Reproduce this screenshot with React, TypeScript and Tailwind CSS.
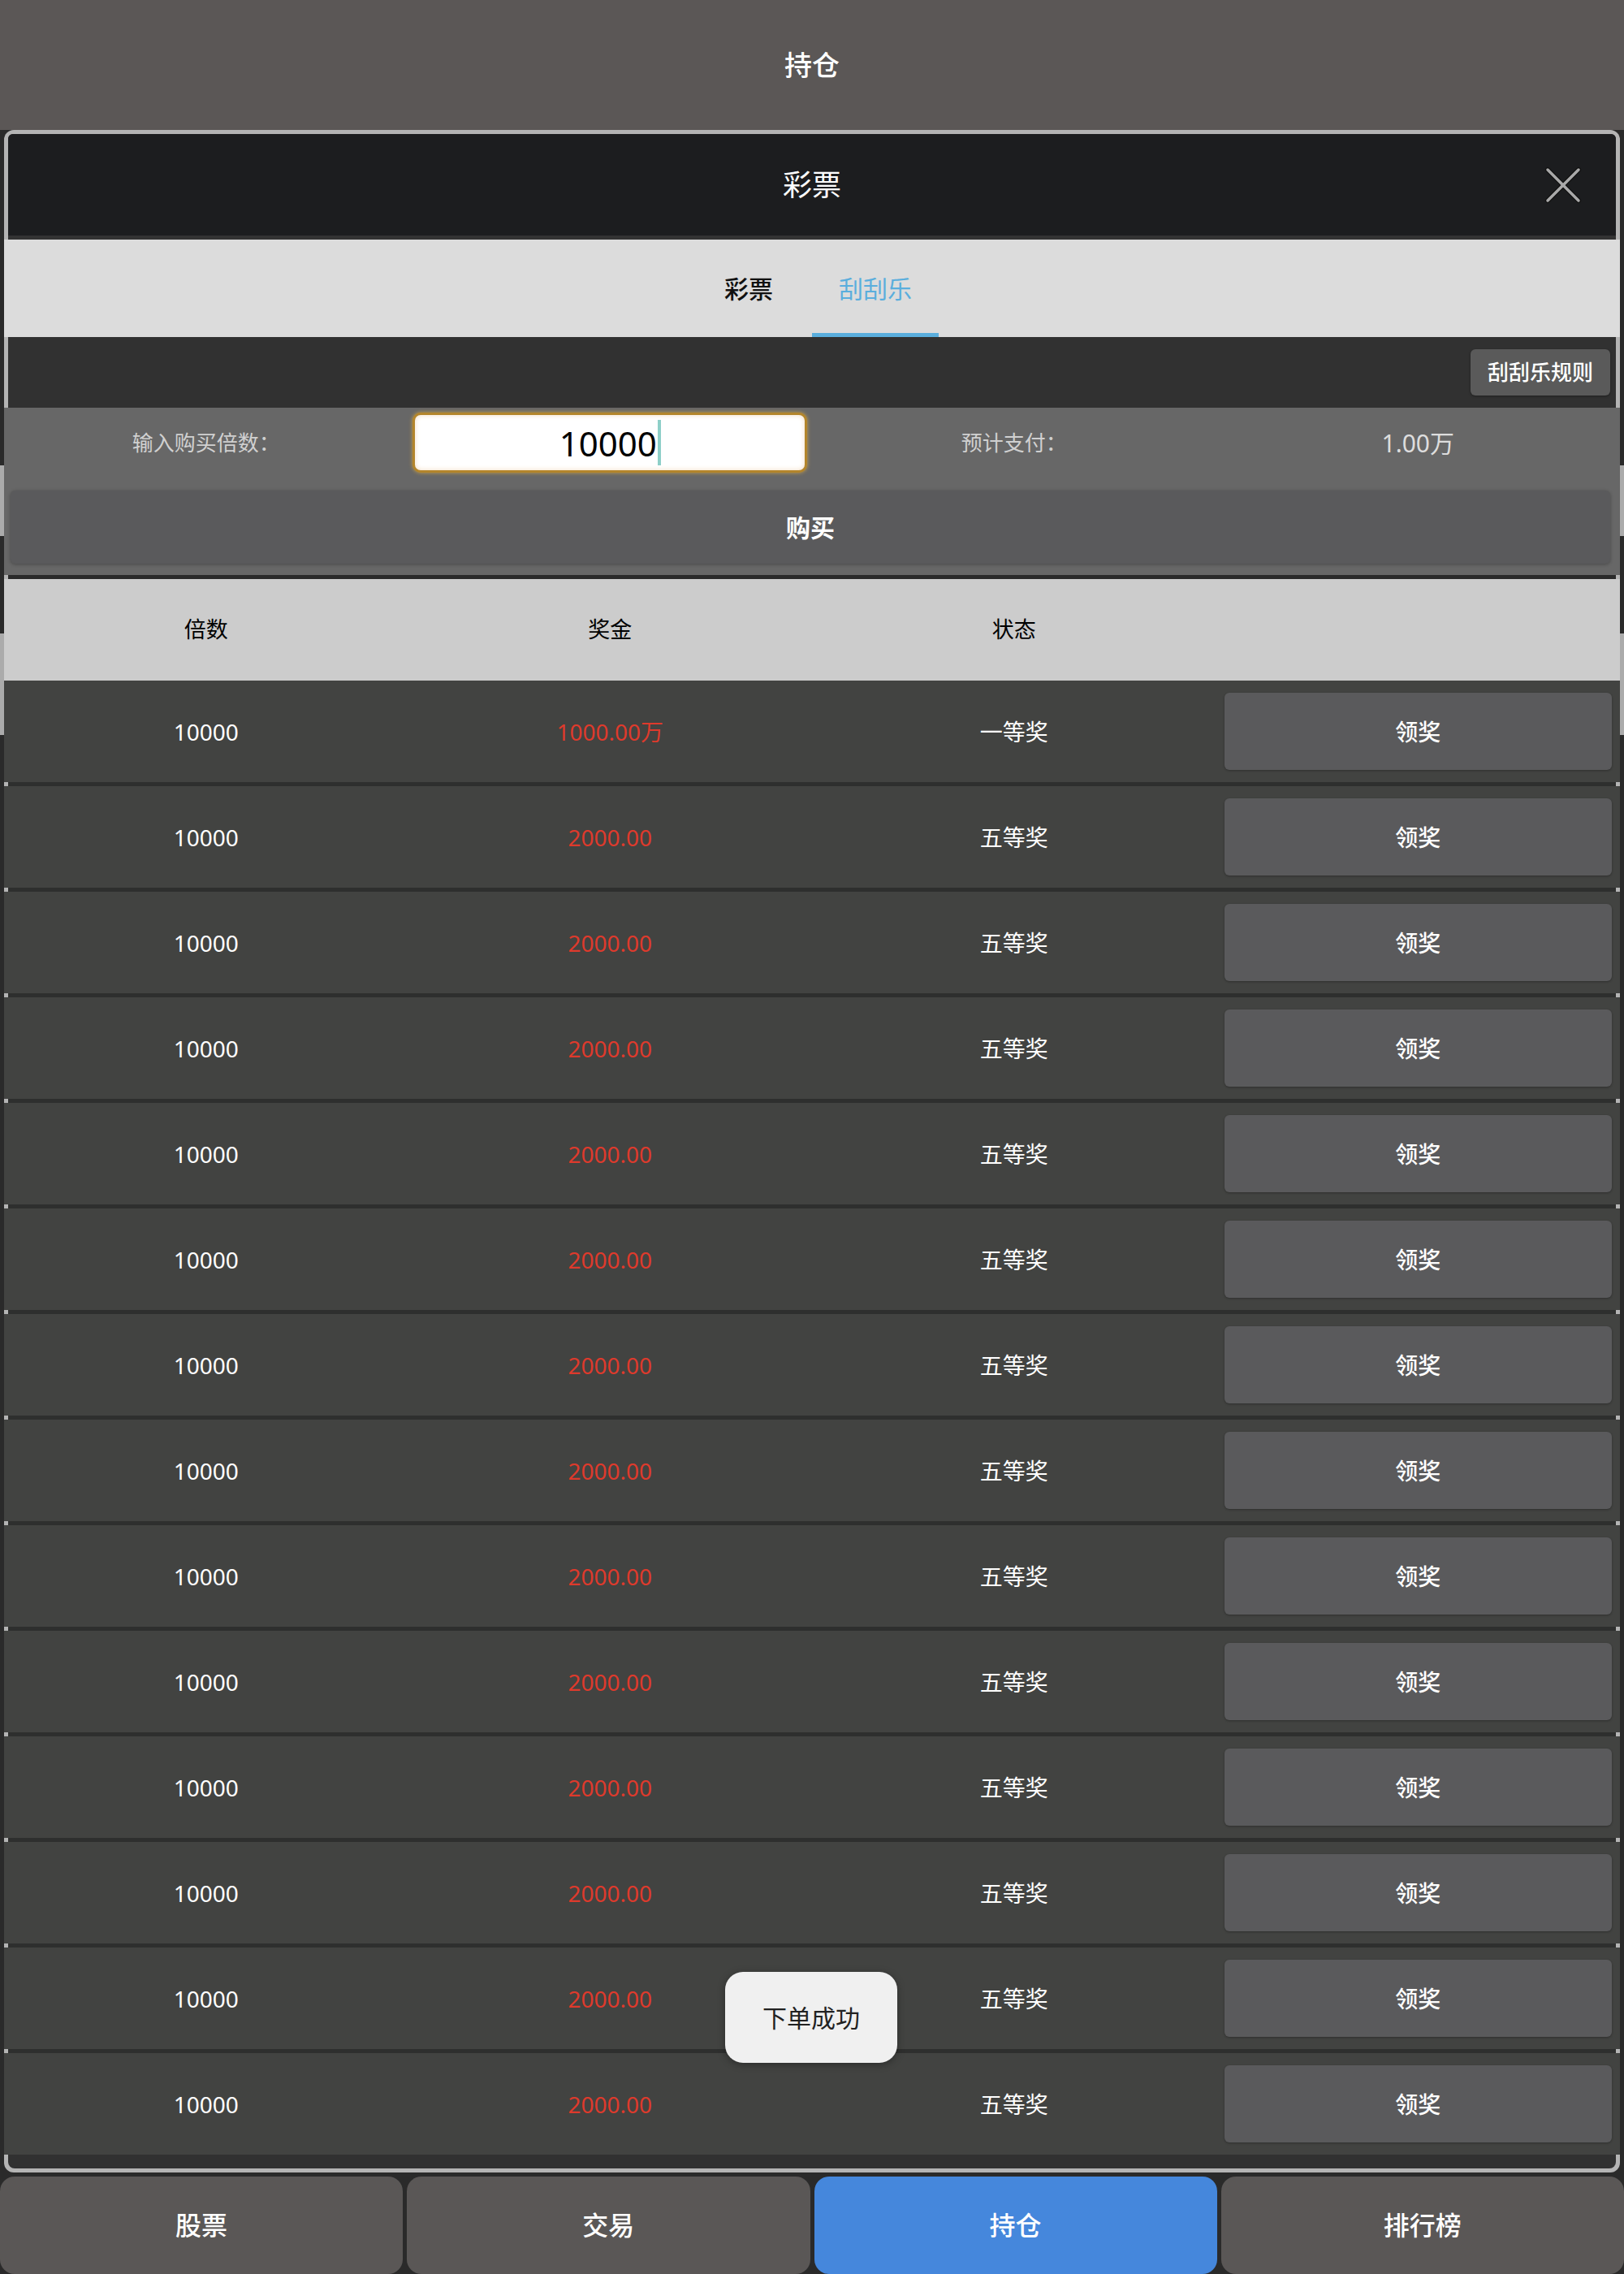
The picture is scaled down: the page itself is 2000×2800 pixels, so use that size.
import { useState } from 'react'

type Ticket = { times: number; prize: string; level: string }

const tickets: Ticket[] = [
  { times: 10000, prize: '1000.00万', level: '一等奖' },
  ...Array.from({ length: 13 }, () => ({ times: 10000, prize: '2000.00', level: '五等奖' })),
]

const navItems = ['股票', '交易', '持仓', '排行榜']

function CloseIcon() {
  return (
    <svg viewBox="0 0 46 46" className="w-[46px] h-[46px]">
      <g strokeLinecap="round">
        <line x1="4" y1="4" x2="42" y2="42" stroke="#111" strokeWidth="6" />
        <line x1="42" y1="4" x2="4" y2="42" stroke="#111" strokeWidth="6" />
        <line x1="4" y1="4" x2="42" y2="42" stroke="#a9a9a9" strokeWidth="3.5" />
        <line x1="42" y1="4" x2="4" y2="42" stroke="#a9a9a9" strokeWidth="3.5" />
      </g>
    </svg>
  )
}

function App() {
  const [tab, setTab] = useState(1)
  const [times] = useState('10000')

  return (
    <div className="relative w-[2000px] h-[2800px] bg-[#2a2a2a] font-['Noto_Sans','Noto_Sans_CJK_SC',sans-serif] overflow-hidden">
      {/* page header */}
      <div className="h-[160px] bg-[#5b5756] flex items-center justify-center text-white text-[34px] font-medium">
        持仓
      </div>

      {/* page body behind the dialog */}
      <div className="h-[2520px] flex flex-col">
        <div className="h-[413px]" />
        <div className="h-[87px] bg-[#ababab]" />
        <div className="h-[120px]" />
        <div className="h-[125px] bg-[#ababab]" />
      </div>

      {/* bottom nav */}
      <div className="h-[120px] grid grid-cols-4 gap-[5px]">
        {navItems.map((item, i) => (
          <div
            key={item}
            className={`flex items-center justify-center rounded-[18px] text-white text-[32px] font-medium ${
              i === 2 ? 'bg-[#4587dc]' : 'bg-[#5a5756]'
            }`}
          >
            {item}
          </div>
        ))}
      </div>

      {/* lottery dialog */}
      <div className="absolute left-[5px] top-[160px] w-[1990px] h-[2515px] bg-[#b4b4b4] rounded-[12px] p-[5px]">
        <div className="h-full bg-[#313131] flex flex-col rounded-t-[6px] rounded-b-[8px]">
          <div className="relative h-[125px] bg-[#1c1d1f] border-b-[5px] border-[#333333] box-content flex items-center justify-center text-white text-[36px] rounded-t-[6px]">
            彩票
            <div className="absolute right-[42px] top-1/2 -translate-y-1/2">
              <CloseIcon />
            </div>
          </div>

          {/* tabs */}
          <div className="-mx-[5px] h-[120px] bg-[#dcdcdc] flex justify-center">
            {['彩票', '刮刮乐'].map((t, i) => (
              <div
                key={t}
                onClick={() => setTab(i)}
                className={`w-[156px] h-full flex items-center justify-center text-[30px] border-b-[5px] pt-[5px] cursor-pointer ${
                  tab === i ? 'text-[#5aaedd] border-[#5aaedd]' : 'text-[#111] font-medium border-transparent'
                }`}
              >
                {t}
              </div>
            ))}
          </div>

          {/* rules */}
          <div className="h-[87px] flex justify-end items-start pt-[15px] pr-[7px]">
            <button className="w-[172px] h-[57px] bg-[#5a5a5a] rounded-[6px] text-white text-[26px] font-medium shadow-[0_1px_3px_rgba(0,0,0,0.4)]">
              刮刮乐规则
            </button>
          </div>

          {/* order input */}
          <div className="-mx-[5px] h-[206px] bg-[#676767] flex flex-col">
            <div className="h-[86px] grid grid-cols-4 items-center text-[26px] text-[#d0d0d0]">
              <div className="text-center">输入购买倍数：</div>
              <div className="flex justify-center">
                <div className="w-[486px] h-[74px] bg-white rounded-[10px] border-[3px] border-[#b3852b] shadow-[0_0_5px_#c9a04a,inset_0_0_6px_#f3dcc0] flex items-center justify-center text-black text-[42px]">
                  <span>{times}</span>
                  <span className="w-[4px] h-[56px] bg-[#8ecfc8] ml-[1px]" />
                </div>
              </div>
              <div className="text-center">预计支付：</div>
              <div className="text-center text-[30px] text-[#dddddd]">1.00万</div>
            </div>
            <div className="px-[8px] pr-[12px] mt-[16px]">
              <button className="w-full h-[90px] bg-[#5a5a5c] rounded-[6px] text-white text-[30px] font-semibold shadow-[0_1px_4px_rgba(0,0,0,0.3)]">
                购买
              </button>
            </div>
          </div>

          <div className="h-[5px] bg-[#2a2a2a]" />

          {/* table header */}
          <div className="-mx-[5px] h-[125px] bg-[#cccccc] grid grid-cols-4 items-center text-[27px] text-black">
            <div className="text-center">倍数</div>
            <div className="text-center">奖金</div>
            <div className="text-center">状态</div>
            <div />
          </div>

          {/* tickets */}
          <div className="flex flex-col gap-[5px] bg-[#2e2f2e]">
            {tickets.map((t, i) => (
              <div key={i} className="-mx-[5px] h-[125px] bg-[#424341] grid grid-cols-4 items-center text-[28px]">
                <div className="text-center text-white">{t.times}</div>
                <div className="text-center text-[#de3a2c]">{t.prize}</div>
                <div className="text-center text-white">{t.level}</div>
                <div className="h-full px-[10px] py-[15px]">
                  <button className="w-full h-full bg-[#5a5a5c] rounded-[6px] text-white text-[28px] font-medium shadow-[0_1px_3px_rgba(0,0,0,0.3)]">
                    领奖
                  </button>
                </div>
              </div>
            ))}
          </div>
        </div>
      </div>

      {/* toast */}
      <div className="absolute left-[893px] top-[2428px] w-[212px] h-[112px] rounded-[22px] bg-[#f0f0f0] shadow-[0_2px_10px_rgba(0,0,0,0.35)] flex items-center justify-center text-[30px] text-[#222]">
        下单成功
      </div>
    </div>
  )
}

export default App
